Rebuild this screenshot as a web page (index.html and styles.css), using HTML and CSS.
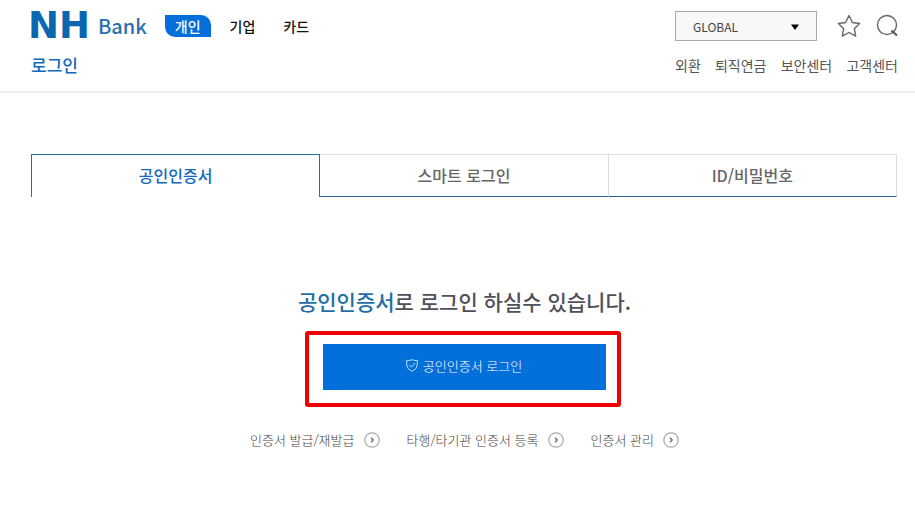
FILE: index.html
```html
<!DOCTYPE html>
<html lang="ko">
<head>
    <meta charset="UTF-8">
    <meta name="viewport" content="width=device-width, initial-scale=1.0">
    <title>NH Bank 로그인</title>
    <link rel="stylesheet" href="styles.css">
</head>
<body>
    <header class="header">
        <div class="header-left">
            <div class="brand">
                <a class="logo" href="#"><span class="logo-nh">NH</span><span class="logo-bank">Bank</span></a>
                <nav class="main-menu">
                    <a class="active" href="#">개인</a>
                    <a href="#">기업</a>
                    <a href="#">카드</a>
                </nav>
            </div>
            <h1 class="page-title">로그인</h1>
        </div>
        <div class="header-right">
            <div class="tools">
                <div class="select-box">
                    <select class="global-select" aria-label="GLOBAL">
                        <option>GLOBAL</option>
                    </select>
                    <svg class="select-arrow" width="8" height="6" viewBox="0 0 8 6"><path d="M0 0.5h8L4 6z" fill="#000"/></svg>
                </div>
                <button class="icon-button star" aria-label="즐겨찾기">
                    <svg width="24" height="24" viewBox="0 0 24 24"><path d="M12 1.5l3.4 7 7.2 1-5.3 5.2 1.4 7.4-6.7-3.6-6.7 3.6 1.4-7.4L1.4 9.500l7.200-1z" fill="none" stroke="#666" stroke-width="1.4" stroke-linejoin="round"/></svg>
                </button>
                <button class="icon-button" aria-label="검색">
                    <svg width="22" height="24" viewBox="0 0 22 24"><circle cx="11" cy="11" r="9.5" fill="none" stroke="#666" stroke-width="1.4"/><path d="M15.5 16.5l5.500 5" stroke="#555" stroke-width="2"/></svg>
                </button>
            </div>
            <nav class="sub-menu">
                <a href="#">외환</a>
                <a href="#">퇴직연금</a>
                <a href="#">보안센터</a>
                <a href="#">고객센터</a>
            </nav>
        </div>
    </header>

    <main>
        <div class="tabs">
            <button class="tab selected">공인인증서</button>
            <button class="tab">스마트 로그인</button>
            <button class="tab">ID/비밀번호</button>
        </div>

        <section class="login">
            <h2 class="login-title"><span>공인인증서</span>로 로그인 하실수 있습니다.</h2>
            <div class="highlight">
                <button class="login-button">
                    <svg width="12" height="13" viewBox="0 0 12 13" fill="none" stroke="#b9dcff"><path d="M.7 1.3Q3.5 2 6 .7q2.5 1.3 5.3.6V6q0 4-5.3 6.3Q.7 10 .7 6z"/><path d="M3.3 5.8l2.2 2.3 3.6-4.2"/></svg>
                    공인인증서 로그인
                </button>
            </div>
            <div class="links">
                <a href="#">인증서 발급/재발급 <svg class="go" viewBox="0 0 16 16"><circle cx="8" cy="8" r="7.2"/><path d="M7 5.8L9.2 8 7 10.2"/></svg></a>
                <a href="#">타행/타기관 인증서 등록 <svg class="go" viewBox="0 0 16 16"><circle cx="8" cy="8" r="7.2"/><path d="M7 5.8L9.2 8 7 10.2"/></svg></a>
                <a href="#">인증서 관리 <svg class="go" viewBox="0 0 16 16"><circle cx="8" cy="8" r="7.2"/><path d="M7 5.8L9.2 8 7 10.2"/></svg></a>
            </div>
        </section>
    </main>
</body>
</html>
```
FILE: styles.css
```css
* {
    box-sizing: border-box;
}

body {
    margin: 0;
    font-family: "Noto Sans CJK KR", sans-serif;
    background-color: #fff;
    color: #444;
}

a {
    color: inherit;
    text-decoration: none;
}

button {
    font-family: inherit;
    cursor: pointer;
}

svg {
    display: block;
}

.header {
    display: flex;
    justify-content: space-between;
    padding: 11px 17px 12px 31px;
    border-bottom: 2px solid #eee;
}

.brand {
    display: flex;
    align-items: center;
    height: 30px;
}

.logo {
    display: flex;
    align-items: center;
    gap: 8px;
    margin-left: -3px;
    color: #0b66b2;
    line-height: 30px;
}

.logo-nh {
    font-family: "DejaVu Sans", sans-serif;
    font-size: 37px;
    font-weight: bold;
}

.logo-bank {
    font-size: 20px;
    font-weight: 500;
    color: #2a6fae;
}

.main-menu {
    display: flex;
    align-items: center;
    gap: 28px;
    margin-left: 18px;
    padding-bottom: 1px;
    font-size: 14px;
    font-weight: 500;
    line-height: 22px;
    color: #111;
}

.main-menu .active {
    margin-right: -9px;
    padding: 0 10px;
    border-radius: 0 10px 0 10px;
    background-color: #036fdb;
    color: #fff;
}

.page-title {
    margin: 11px 0 1px;
    font-size: 17px;
    font-weight: 500;
    line-height: 26px;
    color: #1269bd;
}

.tools {
    display: flex;
    align-items: center;
    height: 30px;
}

.select-box {
    position: relative;
}

.global-select {
    display: block;
    width: 142px;
    height: 30px;
    padding: 0 17px;
    border: 1px solid #aaa;
    border-radius: 0;
    background-color: #f8f8f8;
    font-family: inherit;
    font-size: 12px;
    color: #444;
    appearance: none;
}

.select-arrow {
    position: absolute;
    top: 13px;
    right: 18px;
    pointer-events: none;
}

.icon-button {
    padding: 0;
    border: none;
    background: none;
}

.star {
    margin: 0 15px 0 20px;
}

.sub-menu {
    display: flex;
    justify-content: space-between;
    margin-top: 13px;
    font-size: 14px;
    line-height: 22px;
    color: #555;
}

.tabs {
    display: flex;
    margin: 61px 18px 0 31px;
}

.tab {
    flex: 1;
    height: 43px;
    padding: 0 0 2px;
    border: 1px solid #ddd;
    border-left: none;
    border-bottom-color: #27628f;
    background-color: #fff;
    font-size: 16px;
    font-weight: 500;
    color: #666;
}

.tab.selected {
    border: 1px solid #27739f;
    border-bottom: none;
    color: #1269bd;
}

.login {
    display: flex;
    flex-direction: column;
    align-items: center;
    padding-top: 88px;
}

.login-title {
    margin: 0;
    padding-left: 14px;
    font-size: 21px;
    font-weight: 500;
    line-height: 32px;
    color: #50505a;
}

.login-title span {
    color: #216ea8;
}

.highlight {
    width: 316px;
    margin: 14px 0 0 10px;
    padding: 9px 11px 13px 14px;
    border: 4px solid #f00000;
    border-radius: 3px;
}

.login-button {
    display: flex;
    align-items: center;
    justify-content: center;
    gap: 5px;
    width: 100%;
    height: 46px;
    padding: 0 0 4px;
    border: none;
    background-color: #036fdb;
    font-size: 13px;
    font-weight: 300;
    color: #fff;
}

.links {
    display: flex;
    gap: 27px;
    margin-top: 22px;
    padding-left: 14px;
    font-size: 13px;
    font-weight: 300;
    line-height: 22px;
    color: #444;
}

.links a {
    display: flex;
    align-items: center;
    gap: 9px;
}

.go {
    width: 16px;
    height: 16px;
    fill: none;
    stroke: #aaa;
    stroke-width: 1.3;
}

.go path {
    stroke: #666;
}
```
